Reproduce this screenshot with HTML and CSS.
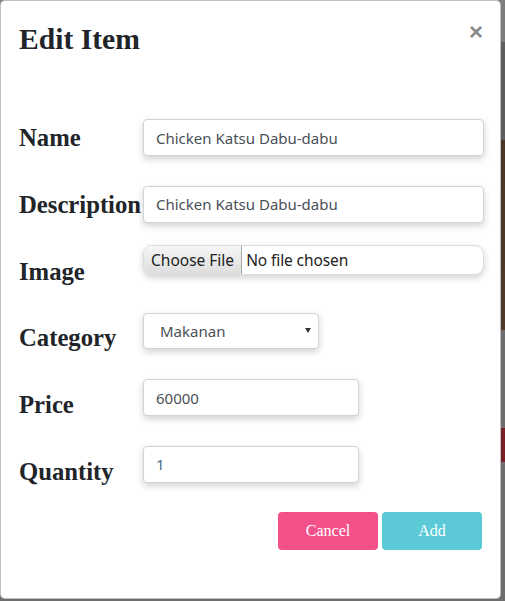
FILE: index.html
```html
<!DOCTYPE html>
<html lang="id">
<head>
<meta charset="utf-8">
<title>Edit Item</title>
<link rel="stylesheet" href="styles.css">
</head>
<body>
<div class="modal">
  <div class="modal-header">
    <h2 class="title">Edit Item</h2>
    <button class="close" type="button">×</button>
  </div>
  <form class="modal-body">
    <div class="row">
      <label class="label">Name</label>
      <input class="control" type="text" value="Chicken Katsu Dabu-dabu">
    </div>
    <div class="row">
      <label class="label">Description</label>
      <input class="control" type="text" value="Chicken Katsu Dabu-dabu">
    </div>
    <div class="row row-file">
      <label class="label">Image</label>
      <input class="file" type="file">
    </div>
    <div class="row row-low">
      <label class="label">Category</label>
      <span class="select-wrap"><select class="control select"><option>Makanan</option></select></span>
    </div>
    <div class="row row-low">
      <label class="label">Price</label>
      <input class="control short" type="text" value="60000">
    </div>
    <div class="row row-low">
      <label class="label">Quantity</label>
      <input class="control short qty" type="text" value="1">
    </div>
    <div class="actions">
      <button class="btn cancel" type="button">Cancel</button>
      <button class="btn add" type="button">Add</button>
    </div>
  </form>
</div>
</body>
</html>
```

FILE: styles.css
```css
html, body {
  margin: 0;
  padding: 0;
}
body {
  width: 505px;
  height: 601px;
  overflow: hidden;
  background: linear-gradient(to bottom, #7c7c7c 0, #7c7c7c 42px, #5e5e5e 42px, #5e5e5e 140px, #4a3629 140px, #4f3a2b 330px, #6e6e6e 330px, #6e6e6e 428px, #7a1f28 428px, #7a1f28 462px, #6e6e6e 462px);
}
.modal {
  box-sizing: border-box;
  width: 501px;
  height: 599px;
  background: #fff;
  border: 1px solid rgba(0, 0, 0, 0.25);
  border-radius: 5px;
}
.modal-header {
  display: flex;
  justify-content: space-between;
  align-items: flex-start;
  padding: 21px 17px 0 18px;
}
.title {
  margin: 0;
  font-family: "Liberation Serif", "Times New Roman", serif;
  font-weight: 700;
  font-size: 29.6px;
  line-height: 1.2;
  color: #212529;
}
.close {
  margin-top: -2px;
  padding: 0;
  border: 0;
  background: transparent;
  font-family: "Liberation Sans", Arial, sans-serif;
  font-weight: 700;
  font-size: 24px;
  line-height: 1;
  color: #8a8a8a;
}
.modal-body {
  display: block;
  margin-top: 61.5px;
  padding: 0 16px 0 18px;
}
.row {
  display: flex;
  align-items: flex-start;
  height: 37px;
  margin-bottom: 29.67px;
}
.row-file {
  margin-bottom: 23.2px;
}
.label {
  flex: none;
  width: 124px;
  margin-top: 4.2px;
  font-family: "Liberation Serif", "Times New Roman", serif;
  font-weight: 700;
  font-size: 24.7px;
  line-height: 1.2;
  color: #212529;
  white-space: nowrap;
}
.row-low .label {
  margin-top: 10.7px;
}
.control {
  box-sizing: border-box;
  flex: 1;
  height: 37px;
  margin: 0;
  padding: 0 12px;
  border: 1px solid #cfd4da;
  border-radius: 4px;
  background: #fff;
  font-family: "Noto Sans", "Open Sans", sans-serif;
  font-size: 15px;
  color: #495057;
  box-shadow: 0 3px 7px rgba(0, 0, 0, 0.18);
  outline: none;
}
.short {
  flex: none;
  width: 216px;
}
.qty {
  color: #4a6a8a;
}
.file {
  box-sizing: border-box;
  flex: 1;
  height: 30px;
  margin: -7px 0 0;
  padding: 0;
  border: 1px solid #dcdcdc;
  border-radius: 9px;
  background: #fff;
  font-family: "Noto Sans", "Open Sans", sans-serif;
  font-size: 15.5px;
  letter-spacing: -0.1px;
  color: #222;
  box-shadow: 0 3px 7px rgba(0, 0, 0, 0.18);
  overflow: hidden;
}
.file::file-selector-button {
  height: 28px;
  margin: 0 4px 0 0;
  padding: 0 7px;
  border: 0;
  border-right: 1px solid #a9a9a9;
  border-radius: 0;
  background: linear-gradient(to bottom, #f6f6f6, #dddddd);
  font-family: inherit;
  font-size: inherit;
  letter-spacing: 0;
  color: #222;
}
.select-wrap {
  position: relative;
  display: block;
  flex: none;
  width: 176px;
  height: 36px;
}
.select {
  display: block;
  width: 100%;
  height: 36px;
  padding-left: 16px;
  -webkit-appearance: none;
  appearance: none;
}
.select-wrap::after {
  content: "";
  position: absolute;
  right: 8px;
  top: 15px;
  border-left: 3px solid transparent;
  border-right: 3px solid transparent;
  border-top: 5px solid #333;
}
.actions {
  display: flex;
  justify-content: flex-end;
  gap: 4px;
  padding-right: 2px;
}
.btn {
  width: 100px;
  height: 38px;
  border: 0;
  border-radius: 4px;
  font-family: "Liberation Serif", "Times New Roman", serif;
  font-size: 16px;
  color: #fff;
}
.cancel {
  background: #f4508a;
}
.add {
  background: #5bcad6;
}
```
